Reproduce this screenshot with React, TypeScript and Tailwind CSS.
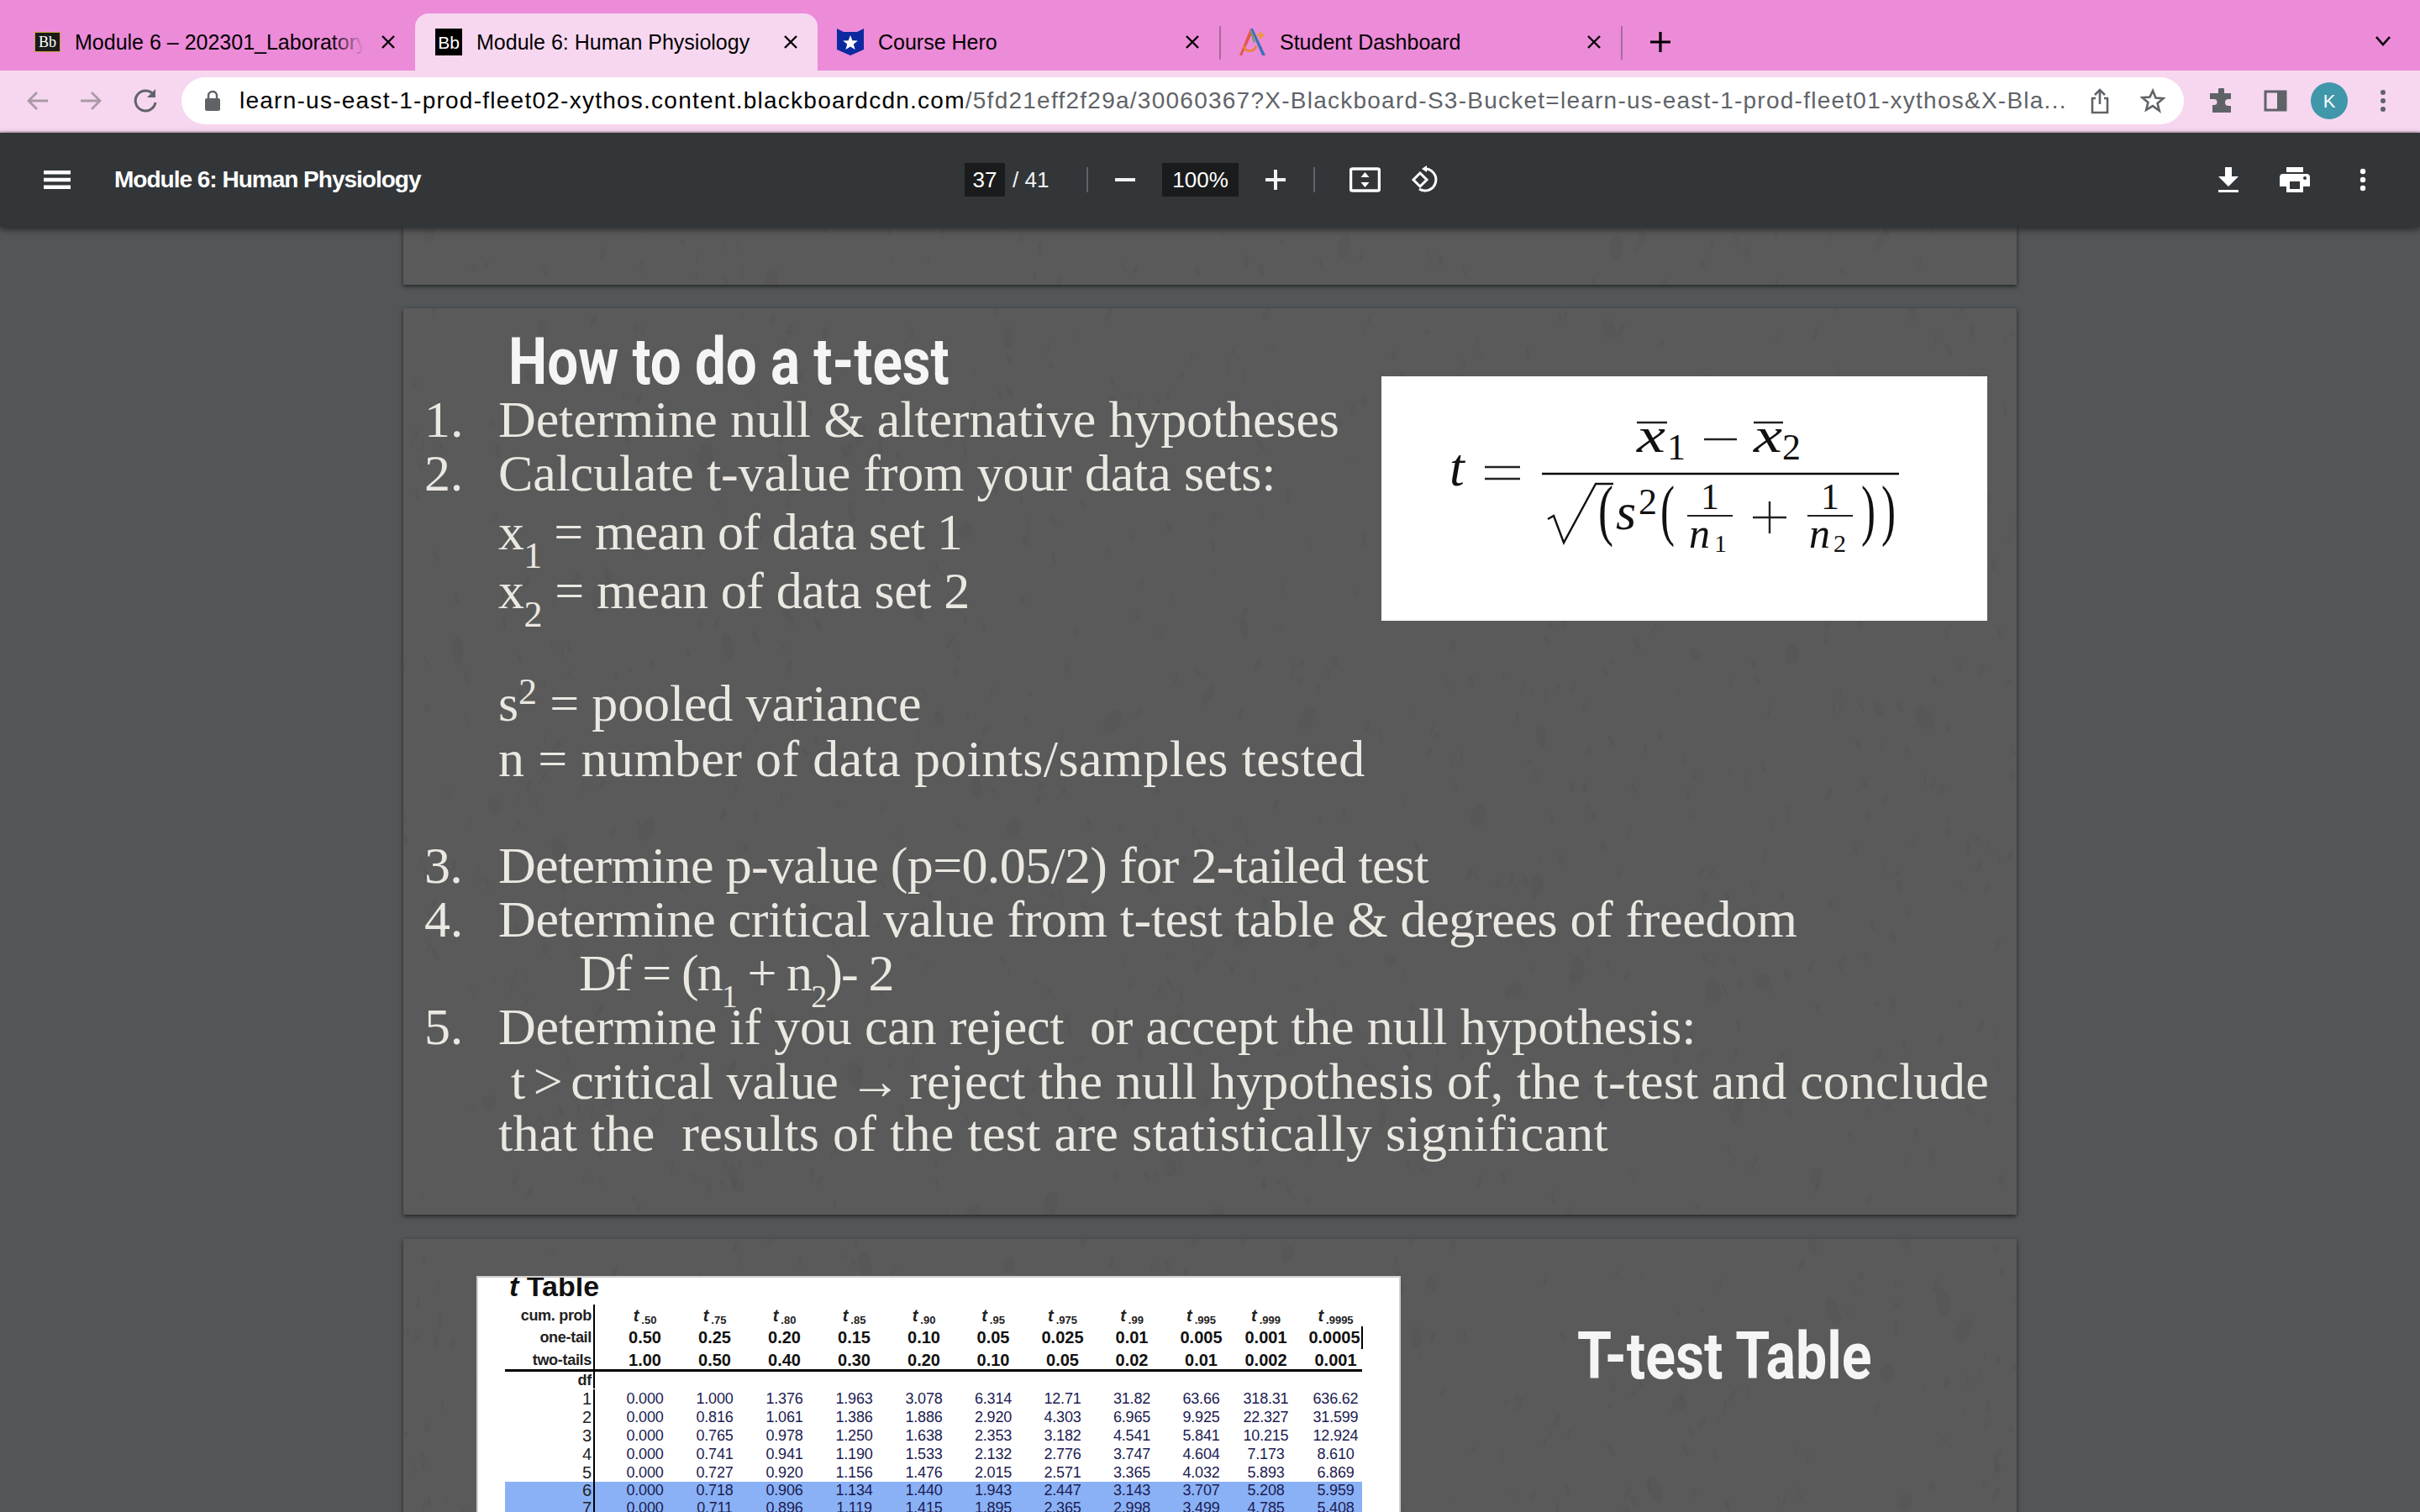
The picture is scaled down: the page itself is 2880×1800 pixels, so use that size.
import React from "react";

const sans = "font-['Liberation_Sans',Arial,sans-serif]";

function Specks({ seed, n, w, h }: { seed: number; n: number; w: number; h: number }) {
  let s = seed;
  const r = () => {
    s = (s * 16807) % 2147483647;
    return s / 2147483647;
  };
  const items = Array.from({ length: n }, (_, i) => {
    const big = r() > 0.92;
    return {
      i,
      x: r() * w,
      y: r() * h,
      rx: big ? 4 + r() * 5 : 1 + r() * 2,
      ry: big ? 8 + r() * 10 : 3 + r() * 6,
      a: r() * 60 - 30,
    };
  });
  return (
    <svg className="absolute inset-0 pointer-events-none" width={w} height={h}>
      {items.map((e) => (
        <ellipse
          key={e.i}
          cx={e.x}
          cy={e.y}
          rx={e.rx}
          ry={e.ry}
          fill="#525252"
          opacity={0.4}
          transform={`rotate(${e.a} ${e.x} ${e.y})`}
        />
      ))}
    </svg>
  );
}

function CloseX() {
  return (
    <svg width="18" height="18" viewBox="0 0 18 18" className="shrink-0">
      <path d="M2 2 16 16M16 2 2 16" stroke="#000" strokeWidth="2.4" />
    </svg>
  );
}

function BbIcon({ framed }: { framed?: boolean }) {
  return (
    <div
      className={
        framed
          ? "w-[31px] h-[24px] shrink-0 bg-[#1b1b1b] border border-[#c9a03c] flex items-center justify-center text-white text-[18px] leading-none font-['Liberation_Serif',serif]"
          : "w-[32px] h-[32px] shrink-0 bg-black flex items-center justify-center text-white text-[21px] leading-none font-['Liberation_Sans',sans-serif]"
      }
    >
      Bb
    </div>
  );
}

function HeroIcon() {
  return (
    <svg width="32" height="32" viewBox="0 0 32 32" className="shrink-0">
      <path d="M0 0 8 4h16l8-4v25l-16 7L0 25z" fill="#0c2aa0" />
      <path d="M16 8l2.4 6.2 6.4.3-5 4.1 1.8 6.4-5.6-3.6-5.6 3.6 1.8-6.4-5-4.1 6.4-.3z" fill="#fff" />
    </svg>
  );
}

function DashIcon() {
  return (
    <svg width="32" height="32" viewBox="0 0 32 32" className="shrink-0">
      <path d="M14 0 1 32h3L15 8z" fill="#e2574c" />
      <path d="M14 0 28 32h4L17 0z" fill="#3f6fb5" />
      <path d="M14 0l1 8 3 9 2-1z" fill="#5da65a" />
      <path d="M6 20c1 8 12 9 15 1" fill="none" stroke="#e8832e" strokeWidth="2.4" />
      <path d="M26 4v8M22 8h8" stroke="#ef9a2d" strokeWidth="2.6" />
    </svg>
  );
}

function Tab({
  icon,
  title,
  active,
  fade,
  w,
}: {
  icon: React.ReactNode;
  title: string;
  active?: boolean;
  fade?: boolean;
  w: string;
}) {
  return (
    <div
      className={`${w} relative h-[68px] flex items-center pr-[23px] shrink-0 rounded-t-[16px] ${
        active ? "bg-[#f7d7f0]" : ""
      }`}
    >
      {icon}
      <div className="relative ml-[17px] flex-1 min-w-0 overflow-hidden whitespace-nowrap text-[25px] leading-[32px] text-black">
        {title}
        {fade && (
          <div className="absolute right-0 top-0 bottom-0 w-[40px] bg-gradient-to-r from-transparent to-[#ec8bd8]" />
        )}
      </div>
      <div className="ml-[20px]">
        <CloseX />
      </div>
    </div>
  );
}

function TabBar() {
  return (
    <div className={`${sans} h-[84px] bg-[#ec8bd8] flex items-end pl-[17px] relative`}>
      <Tab w="w-[477px] pl-[24px]" icon={<BbIcon framed />} title="Module 6 – 202301_Laboratory" fade />
      <Tab w="w-[479px] pl-[24px]" icon={<BbIcon />} title="Module 6: Human Physiology" active />
      <Tab w="w-[478px] pl-[23px]" icon={<HeroIcon />} title="Course Hero" />
      <div className="w-[2px] h-[40px] bg-[#a86a9a] mb-[13px] shrink-0" />
      <Tab w="w-[476px] pl-[21px]" icon={<DashIcon />} title="Student Dashboard" />
      <div className="w-[2px] h-[40px] bg-[#a86a9a] mb-[13px] shrink-0" />
      <div className="ml-[32px] mb-[21px] w-[26px] h-[26px] shrink-0">
        <svg width="26" height="26" viewBox="0 0 26 26">
          <path d="M13 1v24M1 13h24" stroke="#000" strokeWidth="3.2" />
        </svg>
      </div>
      <div className="ml-auto mr-[34px] mb-[28px]">
        <svg width="20" height="14" viewBox="0 0 20 14">
          <path d="M2 2l8 9 8-9" fill="none" stroke="#000" strokeWidth="2.6" />
        </svg>
      </div>
    </div>
  );
}

function AddressBar() {
  return (
    <div className={`${sans} h-[74px] bg-[#f7d7f0] border-b-2 border-[#d6b9d0] flex items-center pl-[32px] pr-[32px]`}>
      <svg width="26" height="26" viewBox="0 0 26 26" className="shrink-0">
        <path d="M25 13H3M12 3 2 13l10 10" fill="none" stroke="#a99aa6" strokeWidth="2.8" />
      </svg>
      <svg width="26" height="26" viewBox="0 0 26 26" className="shrink-0 ml-[37px]">
        <path d="M1 13h22M14 3l10 10-10 10" fill="none" stroke="#a99aa6" strokeWidth="2.8" />
      </svg>
      <svg width="30" height="30" viewBox="0 0 30 30" className="shrink-0 ml-[37px]">
        <path d="M25 8A12 12 0 1 0 27 17" fill="none" stroke="#5f6368" strokeWidth="3" />
        <path d="M27 1v10H17z" fill="#5f6368" />
      </svg>
      <div className="ml-[28px] w-[2383px] h-[56px] rounded-full bg-white flex items-center pl-[27px] shrink-0">
        <svg width="20" height="26" viewBox="0 0 20 26" className="shrink-0">
          <path d="M5 11V7a5 5 0 0 1 10 0v4" fill="none" stroke="#5f6368" strokeWidth="2.4" />
          <rect x="1" y="10" width="18" height="15" rx="2" fill="#5f6368" />
        </svg>
        <div className="ml-[22px] w-[2180px] overflow-hidden whitespace-nowrap text-[28px] tracking-[1.25px] leading-[36px] text-[#5f6368] shrink-0">
          <span className="text-black">learn-us-east-1-prod-fleet02-xythos.content.blackboardcdn.com</span>
          /5fd21eff2f29a/30060367?X-Blackboard-S3-Bucket=learn-us-east-1-prod-fleet01-xythos&amp;X-Bla...
        </div>
        <svg width="26" height="32" viewBox="0 0 26 32" className="shrink-0 ml-[21px]">
          <path d="M13 20V3M7 9l6-6 6 6M8 13H4v17h18V13h-4" fill="none" stroke="#5f6368" strokeWidth="2.6" />
        </svg>
        <svg width="30" height="30" viewBox="0 0 30 30" className="shrink-0 ml-[35px]">
          <path d="M15 3l3.5 8.5 9 .7-6.9 5.8 2.2 8.8L15 21.1l-7.8 4.7 2.2-8.8-6.9-5.8 9-.7z" fill="none" stroke="#5f6368" strokeWidth="2.6" />
        </svg>
      </div>
      <svg width="30" height="30" viewBox="0 0 30 30" className="shrink-0 ml-[30px]">
        <path d="M11 2a3.5 3.5 0 0 1 7 0v4h8v7h-3a3.5 3.5 0 0 0 0 8h3v8H4v-9h2a3.5 3.5 0 0 0 0-7H1V6h10z" fill="#5f6368" />
      </svg>
      <svg width="28" height="28" viewBox="0 0 28 28" className="shrink-0 ml-[35px]">
        <rect x="2" y="3" width="24" height="22" fill="none" stroke="#5f6368" strokeWidth="3" />
        <rect x="16" y="3" width="10" height="22" fill="#5f6368" />
      </svg>
      <div className="ml-[28px] w-[44px] h-[44px] rounded-full bg-[#4097aa] flex items-center justify-center text-white text-[22px] shrink-0">
        K
      </div>
      <svg width="8" height="28" viewBox="0 0 8 28" className="shrink-0 ml-[38px]">
        <circle cx="4" cy="4" r="3" fill="#5f6368" />
        <circle cx="4" cy="14" r="3" fill="#5f6368" />
        <circle cx="4" cy="24" r="3" fill="#5f6368" />
      </svg>
    </div>
  );
}

function ViewerBar() {
  return (
    <div className={`${sans} relative z-10 h-[112px] bg-[#323639] shadow-[0_3px_8px_rgba(0,0,0,0.55)] flex items-center pl-[52px] pr-[64px] text-white shrink-0`}>
      <svg width="32" height="24" viewBox="0 0 32 24" className="shrink-0">
        <path d="M0 1h32v4.500H0zM0 9.750h32v4.500H0zM0 18.500h32v4.500H0z" fill="#fff" />
      </svg>
      <div className="ml-[52px] w-[400px] text-[28px] font-bold tracking-[-1px] leading-[36px] shrink-0 whitespace-nowrap">
        Module 6: Human Physiology
      </div>
      <div className="ml-[612px] w-[48px] h-[40px] bg-[#191b1c] flex items-center justify-center text-[26px] shrink-0">37</div>
      <div className="ml-[9px] w-[50px] text-[26px] leading-[40px] text-[#f1f3f4] whitespace-nowrap shrink-0">/ 41</div>
      <div className="ml-[38px] w-[2px] h-[30px] bg-[#5f6368] shrink-0" />
      <svg width="24" height="4" viewBox="0 0 24 4" className="ml-[32px] shrink-0">
        <path d="M0 0h24v4H0z" fill="#f1f3f4" />
      </svg>
      <div className="ml-[32px] w-[91px] h-[40px] bg-[#191b1c] flex items-center justify-center text-[26px] shrink-0">100%</div>
      <svg width="24" height="24" viewBox="0 0 24 24" className="ml-[32px] shrink-0">
        <path d="M10 0h4v10h10v4H14v10h-4V14H0v-4h10z" fill="#f1f3f4" />
      </svg>
      <div className="ml-[33px] w-[2px] h-[30px] bg-[#5f6368] shrink-0" />
      <svg width="37" height="30" viewBox="0 0 37 30" className="ml-[41px] shrink-0">
        <rect x="1.500" y="2" width="34" height="26" rx="2" fill="none" stroke="#fff" strokeWidth="3.500" />
        <path d="M18.500 6l5 6h-10zM18.500 24l-5-6h10z" fill="#fff" />
      </svg>
      <svg width="36" height="36" viewBox="0 0 36 36" className="ml-[35px] shrink-0">
        <path d="M20 1l-6 4 6 4" fill="#fff" />
        <path d="M17 5a13 13 0 1 1-6 24" fill="none" stroke="#fff" strokeWidth="3" />
        <path d="M12 10l8 8-8 8-8-8z" fill="none" stroke="#fff" strokeWidth="3" />
      </svg>
      <svg width="24" height="30" viewBox="0 0 24 30" className="ml-auto shrink-0">
        <path d="M8 0h8v11h8L12 23 0 11h8zM0 27h24v3H0z" fill="#fff" />
      </svg>
      <svg width="36" height="30" viewBox="0 0 36 30" className="ml-[49px] shrink-0">
        <path d="M8 0h20v6H8zM4 8h28a4 4 0 0 1 4 4v11h-8v7H8v-7H0V12a4 4 0 0 1 4-4z" fill="#fff" />
        <path d="M12 17h12v9H12z" fill="#323639" />
        <circle cx="30" cy="13" r="2" fill="#323639" />
      </svg>
      <svg width="8" height="28" viewBox="0 0 8 28" className="ml-[59px] shrink-0">
        <circle cx="4" cy="4" r="3.2" fill="#fff" />
        <circle cx="4" cy="14" r="3.2" fill="#fff" />
        <circle cx="4" cy="24" r="3.2" fill="#fff" />
      </svg>
    </div>
  );
}

function Formula() {
  const f = "'Liberation Serif',serif";
  return (
    <svg
      className="absolute left-[1164px] top-[81px] bg-white"
      width="721"
      height="291"
      viewBox="0 0 721 291"
      fontFamily={f}
      fill="#111"
    >
      <text x="81" y="130" fontSize="64" fontStyle="italic">t</text>
      <path d="M123 108h42M123 122h42" stroke="#222" strokeWidth="2.6" />
      <path d="M191 116h425" stroke="#000" strokeWidth="2.6" />
      <text x="304" y="90" fontSize="60" fontStyle="italic" textLength="34" lengthAdjust="spacingAndGlyphs">x</text>
      <path d="M304 55h36M443 55h35" stroke="#222" strokeWidth="2.4" />
      <text x="340" y="99" fontSize="44">1</text>
      <path d="M384 75h39" stroke="#222" strokeWidth="2.4" />
      <text x="443" y="90" fontSize="60" fontStyle="italic" textLength="34" lengthAdjust="spacingAndGlyphs">x</text>
      <text x="477" y="99" fontSize="44">2</text>
      <path d="M198 170l7-4 12 32 38-70h21" fill="none" stroke="#111" strokeWidth="2.4" />
      <text x="258" y="186" fontSize="80" textLength="18" lengthAdjust="spacingAndGlyphs">(</text>
      <text x="279" y="182" fontSize="62" fontStyle="italic">s</text>
      <text x="306" y="164" fontSize="44">2</text>
      <text x="332" y="186" fontSize="80" textLength="17" lengthAdjust="spacingAndGlyphs">(</text>
      <path d="M364 166h54M507 166h54" stroke="#222" strokeWidth="2.2" />
      <text x="380" y="158" fontSize="44">1</text>
      <text x="366" y="204" fontSize="50" fontStyle="italic">n</text>
      <text x="396" y="209" fontSize="30">1</text>
      <path d="M462 149v38M442 168h40" stroke="#222" strokeWidth="2.4" />
      <text x="523" y="158" fontSize="44">1</text>
      <text x="509" y="204" fontSize="50" fontStyle="italic">n</text>
      <text x="538" y="209" fontSize="30">2</text>
      <text x="571" y="186" fontSize="80" textLength="17" lengthAdjust="spacingAndGlyphs">)</text>
      <text x="595" y="186" fontSize="80" textLength="17" lengthAdjust="spacingAndGlyphs">)</text>
    </svg>
  );
}

function Num({ n }: { n: string }) {
  return <div className="w-[113px] shrink-0 pl-[25px]">{n}</div>;
}

function HowSlide() {
  const line = "flex h-[64px] leading-[64px] whitespace-nowrap";
  const sub = "text-[44px] bottom-[-22px]";
  const subSmall = "text-[38px] bottom-[-20px]";
  return (
    <div className="relative w-[1920px] h-[1079px] mt-[28px] mx-auto shrink-0 bg-[#5a5a5a] shadow-[0_2px_5px_rgba(0,0,0,0.6)] overflow-hidden">
      <Specks seed={17} n={900} w={1920} h={1079} />
      <Formula />
      <div className="relative pt-[13px] text-[#ebe8e2] text-[62px] font-['Liberation_Serif',serif]">
        <div className="h-[87px] pl-[125px] leading-[103px] font-['Roboto',sans-serif] font-bold text-[77px] text-[#f5f5f5] origin-[125px_50%] scale-x-[0.85] whitespace-nowrap">
          How to do a t-test
        </div>
        <div className={`${line} tracking-[-0.12px]`}><Num n="1." /><span>Determine null &amp; alternative hypotheses</span></div>
        <div className={`${line} tracking-[-0.16px]`}><Num n="2." /><span>Calculate t-value from your data sets:</span></div>
        <div className={`${line} mt-[6px] pl-[113px] tracking-[-0.78px]`}><span>x<sub className={sub}>1</sub> = mean of data set 1</span></div>
        <div className={`${line} mt-[6px] pl-[113px] tracking-[-0.4px]`}><span>x<sub className={sub}>2</sub> = mean of data set 2</span></div>
        <div className={`${line} mt-[70px] pl-[113px] tracking-[-0.15px]`}><span>s<sup className="text-[44px] top-[-20px]">2</sup> = pooled variance</span></div>
        <div className={`${line} mt-[2px] pl-[113px] tracking-[0.38px]`}><span>n = number of data points/samples tested</span></div>
        <div className={`${line} mt-[63px] tracking-[-0.65px]`}><Num n="3." /><span>Determine p-value (p=0.05/2) for 2-tailed test</span></div>
        <div className={`${line} tracking-[-0.36px]`}><Num n="4." /><span>Determine critical value from t-test table &amp; degrees of freedom</span></div>
        <div className={`${line} pl-[209px] tracking-[-1.9px]`}><span>Df = (n<sub className={subSmall}>1</sub> + n<sub className={subSmall}>2</sub>)- 2</span></div>
        <div className={`${line} tracking-[-0.18px]`}><Num n="5." /><span>Determine if you can reject&nbsp; or accept the null hypothesis:</span></div>
        <div className={`${line} mt-[1px] pl-[128px] tracking-[0.1px]`}>
          <span>
            <span className="tracking-[-3px]">t &gt; </span>
            <span className="tracking-[-0.25px]">critical value</span>
            <span className="tracking-[-2.8px]"> → </span>
            reject the null hypothesis of, the t-test and conclude
          </span>
        </div>
        <div className={`${line} mt-[-2px] pl-[113px] tracking-[0.3px]`}><span>that the&nbsp; results of the test are statistically significant</span></div>
      </div>
    </div>
  );
}

const gridCols =
  "grid grid-cols-[107px_18px_83px_83px_83px_83px_83px_82px_83px_82px_83px_71px_95px]";

const heads = [".50", ".75", ".80", ".85", ".90", ".95", ".975", ".99", ".995", ".999", ".9995"];
const oneTail = ["0.50", "0.25", "0.20", "0.15", "0.10", "0.05", "0.025", "0.01", "0.005", "0.001", "0.0005"];
const twoTail = ["1.00", "0.50", "0.40", "0.30", "0.20", "0.10", "0.05", "0.02", "0.01", "0.002", "0.001"];
const rows: [string, string[], boolean, string][] = [
  ["1", ["0.000", "1.000", "1.376", "1.963", "3.078", "6.314", "12.71", "31.82", "63.66", "318.31", "636.62"], false, "h-[22px] leading-[22px] mt-[1px]"],
  ["2", ["0.000", "0.816", "1.061", "1.386", "1.886", "2.920", "4.303", "6.965", "9.925", "22.327", "31.599"], false, "h-[22px] leading-[22px]"],
  ["3", ["0.000", "0.765", "0.978", "1.250", "1.638", "2.353", "3.182", "4.541", "5.841", "10.215", "12.924"], false, "h-[22px] leading-[22px]"],
  ["4", ["0.000", "0.741", "0.941", "1.190", "1.533", "2.132", "2.776", "3.747", "4.604", "7.173", "8.610"], false, "h-[22px] leading-[22px]"],
  ["5", ["0.000", "0.727", "0.920", "1.156", "1.476", "2.015", "2.571", "3.365", "4.032", "5.893", "6.869"], false, "h-[22px] leading-[22px]"],
  ["6", ["0.000", "0.718", "0.906", "1.134", "1.440", "1.943", "2.447", "3.143", "3.707", "5.208", "5.959"], true, "h-[21px] leading-[21px]"],
  ["7", ["0.000", "0.711", "0.896", "1.119", "1.415", "1.895", "2.365", "2.998", "3.499", "4.785", "5.408"], true, "h-[21px] leading-[21px]"],
];

function Label({ children, plain }: { children?: React.ReactNode; plain?: boolean }) {
  return (
    <div
      className={`border-r-2 border-black text-right pr-[2px] text-[#222] whitespace-nowrap ${
        plain ? "text-[20px]" : "text-[18px] font-bold tracking-[-0.3px]"
      }`}
    >
      {children}
    </div>
  );
}

function TableSlide() {
  return (
    <div className="relative w-[1920px] h-[1000px] mt-[29px] mx-auto shrink-0 bg-[#5a5a5a] shadow-[0_2px_5px_rgba(0,0,0,0.6)] overflow-hidden flex items-start">
      <Specks seed={91} n={800} w={1920} h={1000} />
      <div className={`${sans} relative ml-[87px] mt-[44px] w-[1100px] h-[400px] bg-white border-2 border-[#cfcfcf] overflow-hidden shrink-0 pl-[32px]`}>
        <div className="h-[32px] pl-[5px] text-[34px] leading-[20px] font-bold text-[#111] whitespace-nowrap">
          <i>t</i> Table
        </div>
        <div className="w-[1020px] text-center">
          <div className={`${gridCols} h-[26px] leading-[26px]`}>
            <Label>cum. prob</Label>
            <div />
            {heads.map((h) => (
              <div key={h} className="text-[20px] font-bold text-[#222] whitespace-nowrap">
                <i>t</i>
                <sub className="text-[13px] bottom-[-3px] ml-[3px]">{h}</sub>
              </div>
            ))}
          </div>
          <div className={`${gridCols} h-[27px] leading-[27px]`}>
            <Label>one-tail</Label>
            <div />
            {oneTail.map((h, i) => (
              <div key={i} className="text-[20px] font-bold text-[#111]">
                {i === 10 ? (
                  <span className="inline-block border-r-2 border-black pr-[1px]">{h}</span>
                ) : (
                  h
                )}
              </div>
            ))}
          </div>
          <div className={`${gridCols} h-[27px] leading-[27px] border-b-[3px] border-black`}>
            <Label>two-tails</Label>
            <div />
            {twoTail.map((h, i) => (
              <div key={i} className="text-[20px] font-bold text-[#111]">{h}</div>
            ))}
          </div>
          <div className={`${gridCols} h-[20px] leading-[20px]`}>
            <Label>df</Label>
          </div>
          {rows.map(([d, vals, blue, h]) => (
            <div key={d} className={`${gridCols} ${h} ${blue ? "bg-[#8ab1f5]" : ""}`}>
              <Label plain>{d}</Label>
              <div />
              {vals.map((v, i) => (
                <div key={i} className="text-[18px] text-[#1c1c52] tracking-[-0.2px]">{v}</div>
              ))}
            </div>
          ))}
        </div>
      </div>
      <div className="relative ml-[210px] mt-[92px] text-[78px] leading-[96px] font-['Roboto',sans-serif] font-bold text-[#f5f5f5] origin-left scale-x-[0.85] whitespace-nowrap">
        T-test Table
      </div>
    </div>
  );
}

export default function App() {
  return (
    <div className="w-[2880px] h-[1800px] overflow-hidden flex flex-col bg-[#525659]">
      <TabBar />
      <AddressBar />
      <ViewerBar />
      <main className="flex-1 min-h-0 overflow-hidden flex flex-col">
        <div className="relative w-[1920px] h-[69px] mx-auto shrink-0 bg-[#5a5a5a] shadow-[0_2px_5px_rgba(0,0,0,0.6)] overflow-hidden">
          <Specks seed={5} n={60} w={1920} h={69} />
        </div>
        <HowSlide />
        <TableSlide />
      </main>
    </div>
  );
}
